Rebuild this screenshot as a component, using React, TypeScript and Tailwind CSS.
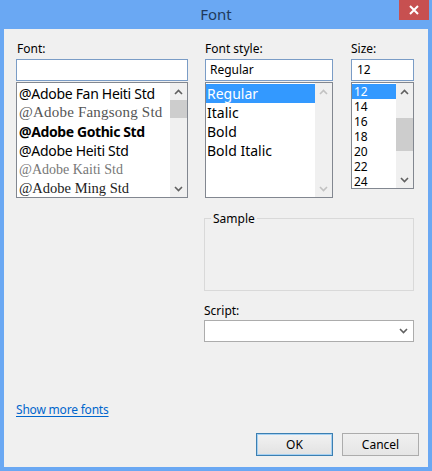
import React from 'react';

const ui = { fontFamily: '"Noto Sans", "Open Sans", sans-serif' };

function Chevron({ up, disabled }: { up?: boolean; disabled?: boolean }) {
  return (
    <svg width="9" height="6" viewBox="0 0 9 6">
      <path
        d={up ? 'M1 5 L4.5 1.5 L8 5' : 'M1 1 L4.5 4.5 L8 1'}
        fill="none"
        stroke={disabled ? '#c2c2c2' : '#606060'}
        strokeWidth="1.6"
      />
    </svg>
  );
}

function ScrollBar({ thumbTop, thumbHeight, disabled }: { thumbTop?: number; thumbHeight?: number; disabled?: boolean }) {
  return (
    <div className="relative w-[17px] h-full bg-[#f0f0f0] flex flex-col justify-between items-center">
      <div className="h-[17px] flex items-center justify-center">
        <Chevron up disabled={disabled} />
      </div>
      {thumbTop !== undefined && (
        <div
          className="absolute left-0 w-[17px] bg-[#cdcdcd]"
          style={{ top: thumbTop, height: thumbHeight }}
        />
      )}
      <div className="h-[17px] flex items-center justify-center">
        <Chevron disabled={disabled} />
      </div>
    </div>
  );
}

const fonts = [
  { name: '@Adobe Fan Heiti Std', cls: 'text-black text-[14px]', ff: '"Noto Sans", sans-serif', w: 'font-normal', ls: '-0.3px' },
  { name: '@Adobe Fangsong Std', cls: 'text-[#555] text-[15px]', ff: '"Liberation Serif", serif', w: 'font-normal', ls: '0.2px' },
  { name: '@Adobe Gothic Std', cls: 'text-black text-[14px]', ff: '"Noto Sans", sans-serif', w: 'font-bold', ls: '-0.4px' },
  { name: '@Adobe Heiti Std', cls: 'text-black text-[14px]', ff: '"Noto Sans", sans-serif', w: 'font-normal', ls: '-0.3px' },
  { name: '@Adobe Kaiti Std', cls: 'text-[#777] text-[14px]', ff: '"Liberation Serif", serif', w: 'font-normal', ls: '0px' },
  { name: '@Adobe Ming Std', cls: 'text-[#222] text-[14.5px]', ff: '"Liberation Serif", serif', w: 'font-normal', ls: '0px' },
];

const styles = ['Regular', 'Italic', 'Bold', 'Bold Italic'];
const sizes = ['12', '14', '16', '18', '20', '22', '24'];

export default function App() {
  return (
    <div className="w-[432px] h-[471px] bg-[#6aa8f3] flex flex-col overflow-hidden" style={ui}>
      {/* title bar */}
      <div className="relative h-[29px] flex items-center justify-center">
        <span className="text-[15px] text-[#1f3a5c] -mt-[1px]">Font</span>
        <div className="absolute right-[3px] top-0 w-[30px] h-[20px] bg-[#c75050] flex items-center justify-center">
          <svg width="10" height="10" viewBox="0 0 10 10">
            <path d="M1 1 L9 9 M9 1 L1 9" stroke="white" strokeWidth="2" />
          </svg>
        </div>
      </div>

      {/* client */}
      <div className="mx-[4px] mb-[4px] flex-1 bg-[#f0f0f0] flex flex-col pl-[12px] pt-[12px] pb-[11px] text-[12px] text-black">
        <div className="flex">
          {/* font */}
          <div className="w-[172px] flex flex-col">
            <div className="h-[15px] leading-[15px] pl-[1px]">Font:</div>
            <div className="mt-[3px] h-[22px] bg-white border border-[#7a9cc6]" />
            <div className="mt-[1px] h-[116px] bg-white border border-[#828790] flex">
              <div className="flex-1 flex flex-col pt-[1px] pl-[2px] overflow-hidden">
                {fonts.map((f) => (
                  <div
                    key={f.name}
                    className={`h-[19px] leading-[19px] whitespace-nowrap ${f.cls} ${f.w}`}
                    style={{ fontFamily: f.ff, letterSpacing: f.ls }}
                  >
                    {f.name}
                  </div>
                ))}
              </div>
              <ScrollBar thumbTop={17} thumbHeight={18} />
            </div>
          </div>

          {/* font style */}
          <div className="ml-[17px] w-[128px] flex flex-col">
            <div className="h-[15px] leading-[15px]">Font style:</div>
            <div className="mt-[3px] h-[22px] bg-white border border-[#7a9cc6] flex items-center pl-[4px]">
              Regular
            </div>
            <div className="mt-[1px] h-[116px] bg-white border border-[#828790] flex">
              <div className="flex-1 flex flex-col pt-[1px] overflow-hidden">
                {styles.map((s, i) => (
                  <div
                    key={s}
                    className={`h-[19px] leading-[19px] text-[14px] pl-[1px] ${i === 0 ? 'bg-[#3399ff] text-white' : ''}`}
                  >
                    {s}
                  </div>
                ))}
              </div>
              <ScrollBar disabled />
            </div>
          </div>

          {/* size */}
          <div className="ml-[18px] w-[63px] flex flex-col">
            <div className="h-[15px] leading-[15px]">Size:</div>
            <div className="mt-[3px] h-[22px] bg-white border border-[#7a9cc6] flex items-center pl-[5px]">
              12
            </div>
            <div className="mt-[1px] h-[107px] bg-white border border-[#828790] flex">
              <div className="flex-1 flex flex-col pt-[1px] overflow-hidden">
                {sizes.map((s, i) => (
                  <div
                    key={s}
                    className={`h-[15px] leading-[15px] text-[12px] pl-[2px] ${i === 0 ? 'bg-[#3399ff] text-white' : ''}`}
                  >
                    {s}
                  </div>
                ))}
              </div>
              <ScrollBar thumbTop={35} thumbHeight={33} />
            </div>
          </div>
        </div>

        {/* sample + script */}
        <div className="ml-[188px] w-[210px] mt-[20px] flex flex-col">
          <div className="h-[73px] border border-[#d9d9d9] flex flex-col">
            <div className="-mt-[8px] ml-[6px] px-[2px] w-fit bg-[#f0f0f0] leading-[15px]">Sample</div>
          </div>
          <div className="mt-[12px] h-[15px] leading-[15px]">Script:</div>
          <div className="mt-[2px] h-[22px] bg-white border border-[#acacac] flex items-center justify-end pr-[5px]">
            <Chevron />
          </div>
        </div>

        <div className="flex-1" />

        {/* link */}
        <div className="h-[15px] leading-[15px]">
          <span className="text-[#0066cc] underline underline-offset-2 tracking-[-0.2px]">Show more fonts</span>
        </div>

        {/* buttons */}
        <div className="mt-[16px] flex justify-end pr-[9px] gap-[9px]">
          <div className="w-[77px] h-[23px] border border-[#3c7fb1] bg-gradient-to-b from-[#f2f2f2] to-[#e2e2e2] flex items-center justify-center shadow-[inset_0_0_0_1px_#a6d1f3]">
            OK
          </div>
          <div className="w-[77px] h-[23px] border border-[#acacac] bg-gradient-to-b from-[#f0f0f0] to-[#e5e5e5] flex items-center justify-center">
            Cancel
          </div>
        </div>
      </div>
    </div>
  );
}
